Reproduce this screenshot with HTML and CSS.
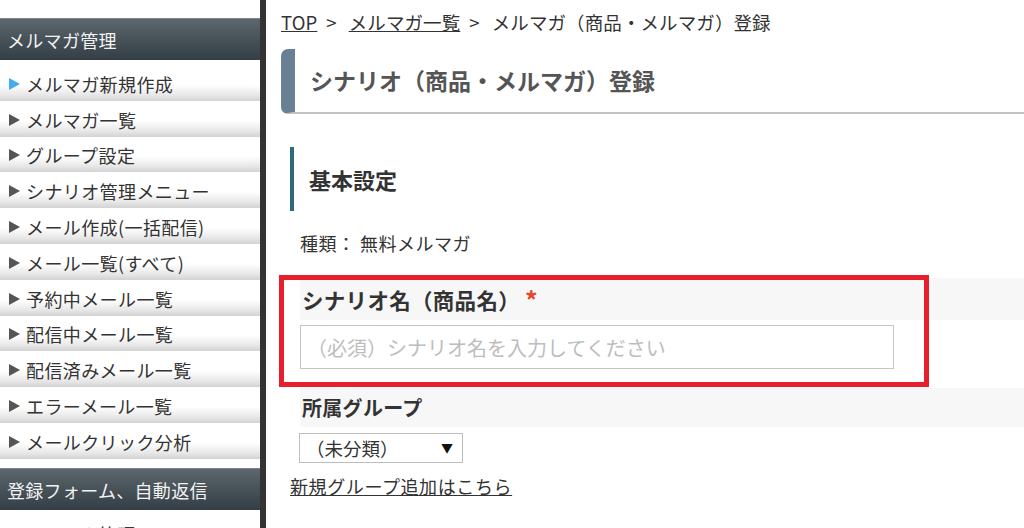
FILE: index.html
```html
<!DOCTYPE html>
<html lang="ja">
<head>
<meta charset="utf-8">
<title>シナリオ登録</title>
<link rel="stylesheet" href="styles.css">
</head>
<body>
<aside class="sidebar">
  <div class="side-head side-head-first">メルマガ管理</div>
  <ul class="side-menu">
    <li class="side-item active"><span class="arrow"></span>メルマガ新規作成</li>
    <li class="side-item"><span class="arrow"></span>メルマガ一覧</li>
    <li class="side-item"><span class="arrow"></span>グループ設定</li>
    <li class="side-item"><span class="arrow"></span>シナリオ管理メニュー</li>
    <li class="side-item"><span class="arrow"></span>メール作成(一括配信)</li>
    <li class="side-item"><span class="arrow"></span>メール一覧(すべて)</li>
    <li class="side-item"><span class="arrow"></span>予約中メール一覧</li>
    <li class="side-item"><span class="arrow"></span>配信中メール一覧</li>
    <li class="side-item"><span class="arrow"></span>配信済みメール一覧</li>
    <li class="side-item"><span class="arrow"></span>エラーメール一覧</li>
    <li class="side-item"><span class="arrow"></span>メールクリック分析</li>
  </ul>
  <div class="side-head">登録フォーム、自動返信</div>
  <ul class="side-menu">
    <li class="side-item"><span class="arrow"></span>フォーム管理</li>
  </ul>
</aside>
<main class="main">
  <nav class="breadcrumb"><a href="#">TOP</a><span class="sep">&gt;</span><a href="#">メルマガ一覧</a><span class="sep">&gt;</span>メルマガ（商品・メルマガ）登録</nav>
  <h1 class="page-title">シナリオ（商品・メルマガ）登録</h1>
  <h2 class="section-title">基本設定</h2>
  <p class="kind">種類： 無料メルマガ</p>
  <div class="field">
    <div class="field-label">シナリオ名（商品名）<span class="req">*</span></div>
    <input class="text-input" type="text" placeholder="（必須）シナリオ名を入力してください">
  </div>
  <div class="field field-group">
    <div class="field-label field-label-sm">所属グループ</div>
    <span class="select-wrap"><select class="select"><option>（未分類）</option></select></span>
  </div>
  <a class="add-link" href="#">新規グループ追加はこちら</a>
  <div class="highlight"></div>
</main>
</body>
</html>
```

FILE: styles.css
```css
* { box-sizing: border-box; }
html, body { margin: 0; padding: 0; }
body {
  display: flex;
  height: 528px;
  overflow: hidden;
  background: #fff;
  color: #333;
  font-family: "Noto Sans CJK JP", "Noto Sans", sans-serif;
}
.sidebar {
  width: 266px;
  flex: none;
  border-right: 6px solid #333;
  padding-top: 18px;
  background: #fff;
}
.side-head {
  height: 42px;
  line-height: 42px;
  padding-left: 7px;
  font-size: 18px;
  letter-spacing: 0.3px;
  color: #f2f2f2;
  background: linear-gradient(to bottom, #5d676e 0%, #4a555c 40%, #333e46 100%);
  border-top: 1px solid #7c858b;
}
.side-menu {
  list-style: none;
  margin: 0 0 8px;
  padding: 6px 0 0;
}
.side-item {
  height: 35.8px;
  display: flex;
  align-items: center;
  padding-left: 9px;
  font-size: 18px;
  letter-spacing: 0.4px;
  color: #333;
  background: linear-gradient(to bottom, #fff 0%, #fff 52%, #e8e8e8 80%, #d3d3d3 97%, #fff 97%);
}
.arrow {
  width: 0;
  height: 0;
  border-left: 11px solid #555;
  border-top: 6px solid transparent;
  border-bottom: 6px solid transparent;
  margin-right: 6px;
}
.side-item.active .arrow { border-left-color: #44acea; }

.main {
  position: relative;
  flex: 1;
  padding-left: 15px;
}
.breadcrumb {
  margin-top: 10px;
  height: 24px;
  line-height: 24px;
  font-size: 18.5px;
  letter-spacing: 0.1px;
  color: #333;
}
.breadcrumb a { color: #333; text-decoration: underline; }
.sep { margin: 0 12px 0 9px; }
.page-title {
  margin: 15px 0 0;
  height: 65px;
  line-height: 62px;
  padding-left: 15px;
  font-size: 23px;
  font-weight: bold;
  color: #555;
  border-left: 14px solid #697f93;
  border-bottom: 2px solid #c2c2c2;
  border-radius: 7px 0 0 7px;
}
.section-title {
  margin: 33px 0 0 9px;
  height: 64px;
  line-height: 64px;
  padding-left: 15px;
  border-left: 4px solid #2c6b77;
  font-size: 22px;
  font-weight: bold;
  color: #333;
}
.kind {
  margin: 20px 0 0 19px;
  height: 24px;
  line-height: 24px;
  font-size: 18px;
  letter-spacing: 0.5px;
}
.field {
  margin: 23px 0 0 19px;
}
.field-label {
  display: flex;
  align-items: center;
  height: 42px;
  padding-left: 2px;
  background: #f7f7f7;
  font-size: 21.5px;
  letter-spacing: 0.3px;
  font-weight: bold;
  color: #333;
}
.req { color: #e8472a; margin-left: 5px; font-size: 25px; line-height: 1; }
.text-input {
  display: block;
  margin-top: 5px;
  width: 594px;
  height: 44px;
  padding: 0 6px;
  border: 1px solid #c4c4c4;
  font-family: inherit;
  font-size: 20px;
  color: #333;
}
.text-input::placeholder { color: #bdbdbd; }
.field-group { margin-top: 19px; }
.field-label-sm { height: 39px; font-size: 20px; }
.select-wrap {
  position: relative;
  display: inline-block;
  margin-top: 6px;
  margin-left: -1px;
}
.select-wrap::after {
  content: "▼";
  position: absolute;
  right: 10px;
  top: 0;
  line-height: 30px;
  font-size: 12px;
  color: #111;
  pointer-events: none;
}
.select {
  appearance: none;
  -webkit-appearance: none;
  width: 164px;
  height: 30px;
  padding: 0 0 0 6px;
  border: 1px solid #bdbdbd;
  border-radius: 0;
  background: #fff;
  font-family: inherit;
  font-size: 18.5px;
  color: #333;
}
.add-link {
  display: block;
  margin: 11px 0 0 9px;
  height: 24px;
  line-height: 24px;
  font-size: 18px;
  letter-spacing: 0.6px;
  color: #333;
  text-decoration: underline;
}
.highlight {
  position: absolute;
  left: 13px;
  top: 275px;
  width: 650px;
  height: 112px;
  border: 5px solid #e71f2c;
  pointer-events: none;
}
```
